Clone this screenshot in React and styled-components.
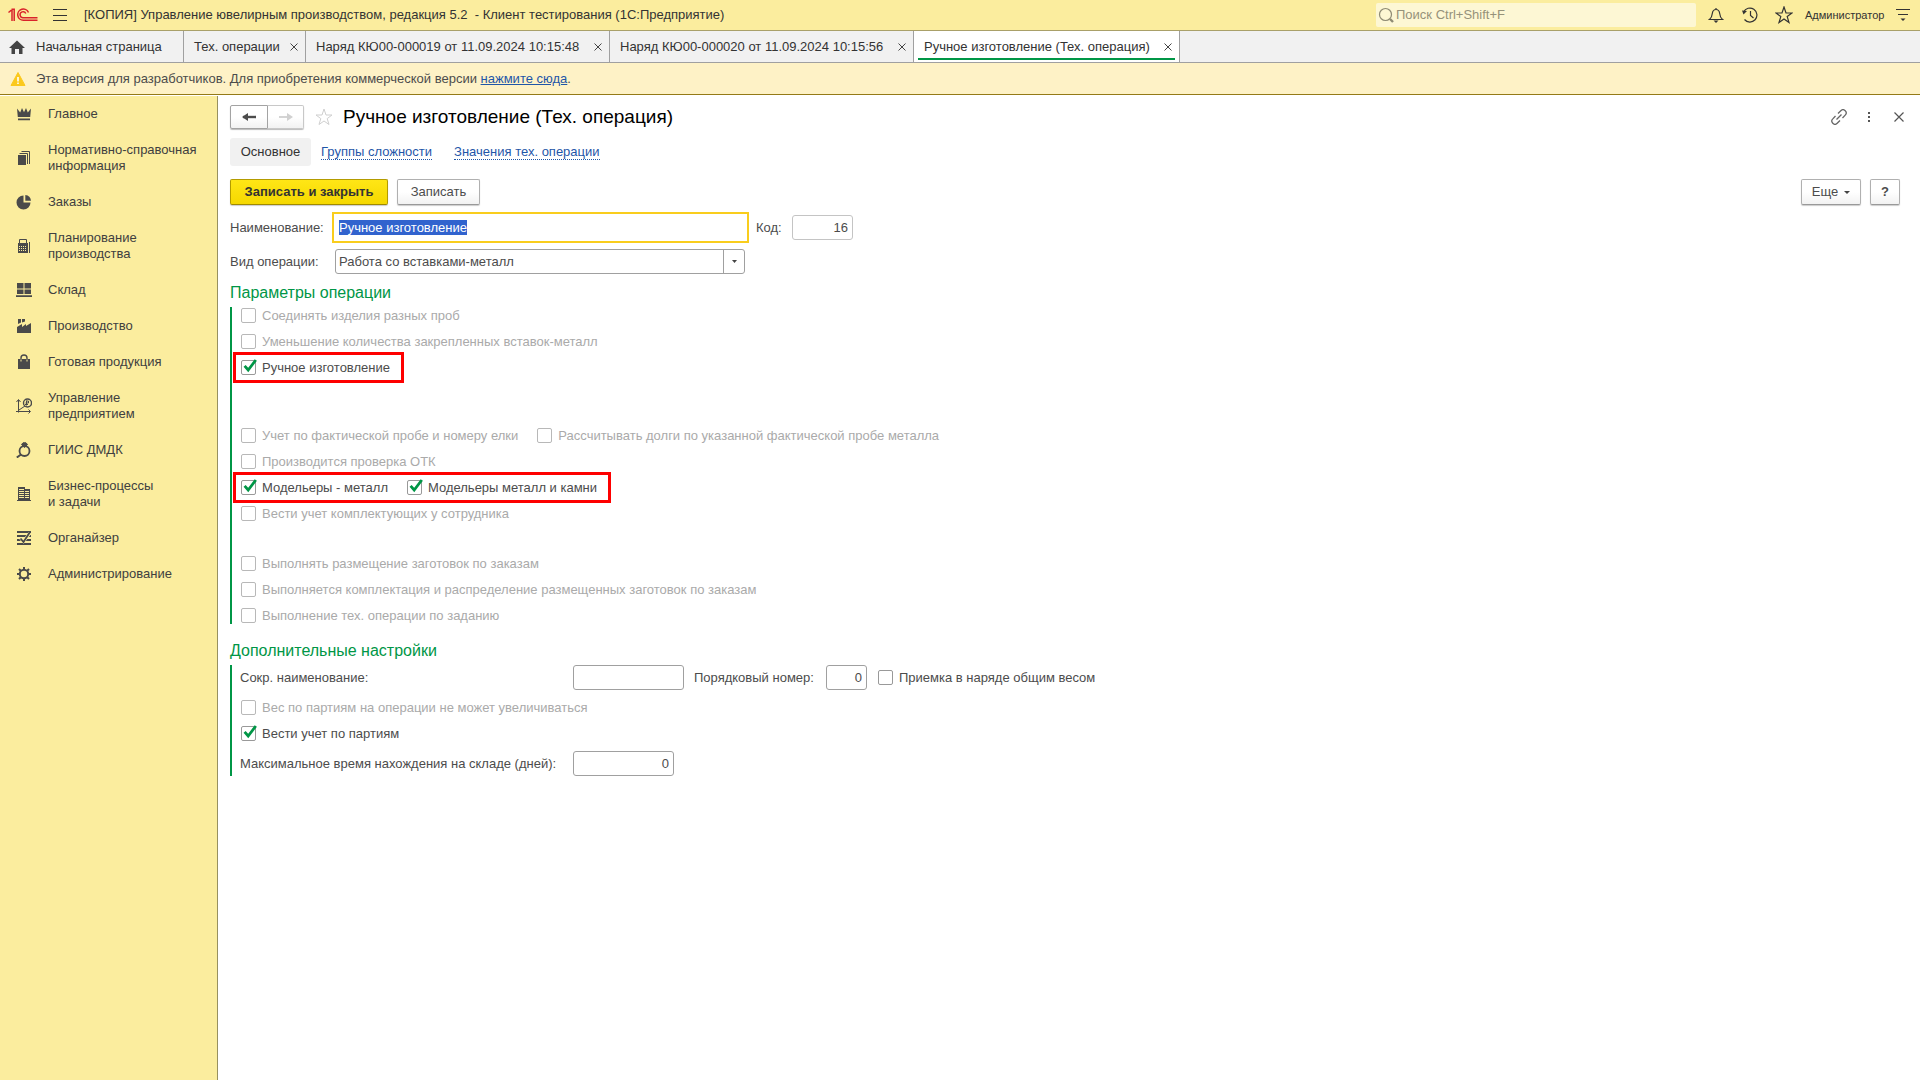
import React, { useEffect, useRef } from "react";
import styled, { createGlobalStyle } from "styled-components";

const c = {
  header: "#fbed9e",
  banner: "#fef2c6",
  grey: "#f1f1f1",
  line: "#a0a0a0",
  text: "#4c4c4c",
  dark: "#333333",
  muted: "#aaaaaa",
  green: "#009646",
  link: "#1f56a8",
};

const GlobalStyle = createGlobalStyle`
  * { box-sizing: border-box; }
  html, body, #root { height: 100%; }
  body {
    margin: 0;
    background: #fff;
    color: ${c.text};
    font: 13px/16px "Liberation Sans", Arial, sans-serif;
  }
  button, input, select { font: inherit; color: inherit; margin: 0; }
`;

const Page = styled.div`
  display: flex;
  flex-direction: column;
  min-height: 100%;
`;

const Header = styled.header`
  display: flex;
  align-items: center;
  height: 31px;
  padding: 0 8px;
  background: ${c.header};
  border-bottom: 1px solid #a9a069;
  color: ${c.dark};
`;

const IconButton = styled.button`
  display: flex;
  align-items: center;
  justify-content: center;
  width: ${(p) => p.$w || 34}px;
  height: 24px;
  padding: 0;
  border: 0;
  background: none;
  color: ${(p) => p.$color || c.dark};
`;

const AppTitle = styled.div`
  flex: 1;
  padding-left: 2px;
  white-space: pre;
`;

const Search = styled.label`
  display: flex;
  align-items: center;
  gap: 2px;
  width: 320px;
  height: 24px;
  margin-right: 3px;
  padding-left: 2px;
  border-radius: 2px;
  background: #fdf7d4;
  color: #8f8b74;
`;

const SearchInput = styled.input`
  flex: 1;
  min-width: 0;
  height: 22px;
  padding: 0 0 2px;
  border: 0;
  outline: 0;
  background: none;
  &::placeholder { color: #96927a; opacity: 1; }
`;

const User = styled.a`
  width: 93px;
  padding-left: 4px;
  font-size: 11px;
  color: ${c.dark};
  text-decoration: none;
`;

const TabBar = styled.nav`
  display: flex;
  height: 32px;
  background: ${c.grey};
  border-bottom: 1px solid ${c.line};
`;

const Tab = styled.div`
  display: flex;
  align-items: center;
  gap: 5px;
  min-width: ${(p) => p.$w}px;
  padding: 0 4px 0 ${(p) => (p.$home ? 8 : 10)}px;
  border-right: 1px solid ${c.line};
  background: ${(p) => (p.$active ? "#fff" : "none")};
  box-shadow: ${(p) => (p.$active ? `inset 0 -2px #fff, inset 4px 0 #fff, inset -4px 0 #fff, inset 0 -4px ${c.green}` : "none")};
  color: ${c.dark};
`;

const TabLink = styled.a`
  display: flex;
  flex: 1;
  align-items: center;
  gap: 10px;
  color: inherit;
  text-decoration: none;
  white-space: nowrap;
`;

const TabClose = styled.button`
  display: flex;
  width: 14px;
  height: 16px;
  padding: 0;
  align-items: center;
  justify-content: center;
  border: 0;
  background: none;
`;

const Banner = styled.div`
  display: flex;
  align-items: center;
  gap: 10px;
  height: 32px;
  padding-left: 10px;
  background: ${c.banner};
  border-bottom: 1px solid #947a17;
`;

const BannerLink = styled.a`
  color: ${c.link};
  text-decoration: underline;
`;

const Body = styled.div`
  display: flex;
  flex: 1;
  padding-top: 1px;
`;

const Sidebar = styled.nav`
  width: 218px;
  flex: none;
  background: ${c.header};
  border-right: 1px solid #97905f;
`;

const SideItem = styled.a`
  display: flex;
  align-items: center;
  gap: 16px;
  padding: 10px 8px 10px 16px;
  color: #404040;
  text-decoration: none;
  white-space: pre-line;
  svg { flex: none; }
`;

const Main = styled.main`
  flex: 1;
  min-width: 0;
  padding: 8px 6px 20px 12px;
`;

const TitleRow = styled.div`
  display: flex;
  align-items: center;
  height: 25px;
`;

const NavGroup = styled.div`
  display: flex;
  border-radius: 2px;
  box-shadow: 0 1px 1px #bbb;
`;

const NavButton = styled.button`
  display: flex;
  align-items: center;
  justify-content: center;
  width: ${(p) => (p.$last ? 36 : 38)}px;
  height: 24px;
  padding: 0;
  border: 1px solid ${(p) => (p.disabled ? "#c8c8c8" : "#a3a3a3")};
  border-left-width: ${(p) => (p.$last ? 0 : 1)}px;
  border-radius: ${(p) => (p.$last ? "0 2px 2px 0" : "2px 0 0 2px")};
  background: linear-gradient(#fff 50%, #f2f2f2);
  color: ${(p) => (p.disabled ? "#d0d0d0" : "#4c4c4c")};
`;

const Title = styled.h1`
  flex: 1;
  margin: 0;
  font-size: 19px;
  line-height: 24px;
  font-weight: 400;
  color: #000;
`;

const SubNav = styled.nav`
  display: flex;
  align-items: center;
  gap: 22px;
  height: 28px;
  margin-top: 9px;
`;

const Current = styled.span`
  min-width: 81px;
  margin-right: -12px;
  padding: 6px 0;
  border-radius: 3px;
  background: ${c.grey};
  color: ${c.dark};
  text-align: center;
`;

const SubLink = styled.a`
  line-height: 15px;
  border-bottom: 1px dotted ${c.link};
  color: ${c.link};
  text-decoration: none;
`;

const Commands = styled.div`
  display: flex;
  gap: 9px;
  margin-top: 13px;
  padding-right: 14px;
`;

const Spacer = styled.div`
  flex: 1;
`;

const Button = styled.button`
  display: flex;
  align-items: center;
  justify-content: center;
  gap: 6px;
  min-width: ${(p) => p.$w}px;
  height: 26px;
  padding: 0 8px;
  border: 1px solid ${(p) => (p.$primary ? "#b39b00" : "#b0b0b0")};
  border-bottom-color: ${(p) => (p.$primary ? "#a08a00" : "#999")};
  border-radius: 2px;
  background: ${(p) => (p.$primary ? "linear-gradient(#ffe616, #f5d800)" : "linear-gradient(#fff 50%, #f2f2f2)")};
  box-shadow: 0 1px 1px #ccc;
  color: ${(p) => (p.$primary ? c.dark : c.text)};
  font-weight: ${(p) => (p.$primary || p.$bold ? 700 : 400)};
  white-space: nowrap;
`;

const Field = styled.div`
  display: flex;
  align-items: center;
  height: 31px;
  margin-top: ${(p) => p.$top || 0}px;
`;

const FieldLabel = styled.label`
  flex: none;
  width: ${(p) => p.$w}px;
`;

const TextInput = styled.input`
  width: ${(p) => p.$w}px;
  height: 25px;
  padding: 0 4px;
  border: 1px solid ${(p) => (p.$light ? "#c4c4c4" : c.line)};
  border-radius: 3px;
  outline: 0;
  background: #fff;
  text-align: ${(p) => (p.$right ? "right" : "left")};
`;

const NameInput = styled.input`
  width: 417px;
  height: 31px;
  margin-right: 7px;
  padding: 0 5px;
  border: 2px solid #f9cd1d;
  outline: 0;
  background: #fff;
  &::selection { background: #3163ce; color: #fff; }
`;

const SelectBox = styled.div`
  display: grid;
  width: 410px;
  height: 25px;
  margin-left: 3px;
  border: 1px solid ${c.line};
  border-radius: 3px;
  > * { grid-area: 1 / 1; }
`;

const Select = styled.select`
  width: 100%;
  padding: 0 24px 0 3px;
  border: 0;
  outline: 0;
  appearance: none;
  background: none;
`;

const SelectArrow = styled.span`
  display: flex;
  align-items: center;
  justify-content: center;
  justify-self: end;
  width: 21px;
  border-left: 1px solid ${c.line};
  pointer-events: none;
`;

const SectionTitle = styled.h2`
  margin: ${(p) => p.$top}px 0 4px;
  font-size: 16px;
  line-height: 20px;
  font-weight: 400;
  color: ${c.green};
`;

const Section = styled.section`
  display: flex;
  flex-direction: column;
  align-items: flex-start;
  gap: ${(p) => p.$gap}px;
  padding: ${(p) => (p.$pad ? "1px 0" : 0)};
  padding-left: 8px;
  border-left: 2px solid ${c.green};
`;

const CheckRow = styled.div`
  display: flex;
  align-items: center;
  gap: 19px;
  height: 15px;
  margin-top: ${(p) => p.$space || 0}px;
  margin-left: 1px;
  padding-right: 6px;
  outline: ${(p) => (p.$marked ? "3px solid #fe0000" : "none")};
  outline-offset: 5px;
`;

const CheckLabel = styled.label`
  display: flex;
  align-items: center;
  gap: 6px;
  line-height: 15px;
  color: ${(p) => (p.$off ? c.muted : c.text)};
  white-space: nowrap;
`;

const CheckFrame = styled.span`
  display: grid;
  width: 15px;
  height: 15px;
  > * { grid-area: 1 / 1; }
  svg { overflow: visible; pointer-events: none; }
`;

const CheckInput = styled.input`
  appearance: none;
  width: 15px;
  height: 15px;
  border: 1px solid ${(p) => (p.disabled ? "#b8b8b8" : "#999")};
  border-radius: 2px;
  background: #fff;
`;

const SettingRow = styled.div`
  display: flex;
  align-items: center;
  height: 25px;
`;

const Gap = styled.div`
  width: ${(p) => p.$w}px;
`;

function Check({ label, checked, off }) {
  return (
    <CheckLabel $off={off}>
      <CheckFrame>
        <CheckInput type="checkbox" defaultChecked={checked} disabled={off} />
        {checked && (
          <svg width="15" height="15" viewBox="0 0 15 15" fill="none" stroke={c.green} strokeWidth="2.8">
            <path d="M3.6 5.8 L7.2 10 L14.8 0" />
          </svg>
        )}
      </CheckFrame>
      {label}
    </CheckLabel>
  );
}

const Svg = ({ s = 16, children, ...rest }) => (
  <svg width={s} height={s} viewBox={`0 0 ${s} ${s}`} fill="none" aria-hidden="true" {...rest}>
    {children}
  </svg>
);

const k = "#4a4a4a";
const icons = {
  crown: <Svg fill={k}><path d="M1 2.500l3.200 3.900L6 2l2 4.200L10 2l1.800 4.400L15 2.500l-.8 8.500H1.800zM2 12.500h12v1.700H2z" /></Svg>,
  docs: (
    <Svg stroke={k}>
      <path d="M2 5h8v10H2z" fill={k} stroke="none" />
      <path d="M3.500 3.500h8V14M5.500 1.500h8V14" />
    </Svg>
  ),
  pie: (
    <Svg fill={k}>
      <path d="M7.500 1.500v7h7A7 7 0 1 1 7.500 1.500z" />
      <path d="M9.300 1A6.500 6.500 0 0 1 15 6.800H9.300z" />
    </Svg>
  ),
  calc: (
    <Svg>
      <path d="M2 5h10v10H2zM13 4h1v11h-1z" fill={k} />
      <path d="M3.500 1.500h7v4h-7z" fill={c.header} stroke={k} />
      <path d="M3 8.500h8M3 10.500h8M3 12.500h8" stroke={c.header} strokeDasharray="1 1" />
    </Svg>
  ),
  store: <Svg fill={k}><path d="M1 1h6.500v5.500H1zM8.500 1H15v5.500H8.500zM1 7.500h6.500V12H1zM8.500 7.500H15V12H8.500zM0 13.200h16V15H0z" /></Svg>,
  factory: <Svg fill={k}><path d="M1 15V9l5-3v3l4-3v2l5-3v10zM2 1h3v3.500L2 6zM6 1h3v2.500L6 4.500z" /></Svg>,
  bag: (
    <Svg>
      <path d="M2 5h12v10H2z" fill={k} />
      <path d="M5 5V4a3 3 0 0 1 6 0v1" stroke={k} strokeWidth="1.400" />
      <path d="M5 5.500v2M11 5.500v2" stroke={c.header} />
    </Svg>
  ),
  chart: (
    <Svg stroke={k}>
      <path d="M2.500 2v12.500M0 13.500h14M.5 4l2-2.500 2 2.500M12.500 11.500l2 2-2 2M3 12l6-4" />
      <circle cx="11.500" cy="5" r="4" strokeWidth="1.400" />
      <path d="M10.500 2.500v5M10.500 3h2v2h-3M9 6.500h3" />
    </Svg>
  ),
  ring: (
    <Svg stroke={k}>
      <circle cx="8.500" cy="9" r="5" strokeWidth="1.800" />
      <path d="M5.500 2.500L7 .8h3l1.500 1.700-3 3z" fill={k} />
      <path d="M5 12.500L.8 15.500" strokeWidth="2" />
    </Svg>
  ),
  building: (
    <Svg fill={k}>
      <path d="M2 1h7v13H2zM9 3h5v11H9zM1 14h14v1H1z" />
      <path d="M3 3.500h5M3 5.500h5M3 7.500h5M3 9.500h5M3 11.500h5M9 5.500h4M9 7.500h4M9 9.500h4M9 11.500h4" stroke={c.header} />
    </Svg>
  ),
  organizer: (
    <Svg stroke={k}>
      <path d="M1 2h14M1 6h14M1 10h14M1 14h14" strokeWidth="2" />
      <path d="M4.500 8.500l3 3L14 3" stroke={c.header} strokeWidth="3" />
      <path d="M4.500 8.500l3 3.500L14 2" strokeWidth="1.800" />
    </Svg>
  ),
  gear: (
    <Svg stroke={k}>
      <circle cx="8" cy="8" r="4.200" strokeWidth="2" />
      <path d="M8 1v3M8 12v3M1 8h3M12 8h3M3 3l2 2M11 11l2 2M13 3l-2 2M5 11l-2 2" strokeWidth="2" />
    </Svg>
  ),
};

const sideItems = [
  ["crown", "Главное"],
  ["docs", "Нормативно-справочная\nинформация"],
  ["pie", "Заказы"],
  ["calc", "Планирование\nпроизводства"],
  ["store", "Склад"],
  ["factory", "Производство"],
  ["bag", "Готовая продукция"],
  ["chart", "Управление\nпредприятием"],
  ["ring", "ГИИС ДМДК"],
  ["building", "Бизнес-процессы\nи задачи"],
  ["organizer", "Органайзер"],
  ["gear", "Администрирование"],
];

const tabs = [
  { label: "Тех. операции", width: 122 },
  { label: "Наряд КЮ00-000019 от 11.09.2024 10:15:48", width: 304 },
  { label: "Наряд КЮ00-000020 от 11.09.2024 10:15:56", width: 304 },
  { label: "Ручное изготовление (Тех. операция)", width: 266, active: true },
];

const params = [
  { items: [{ label: "Соединять изделия разных проб", off: true }] },
  { items: [{ label: "Уменьшение количества закрепленных вставок-металл", off: true }] },
  { marked: true, items: [{ label: "Ручное изготовление", checked: true }] },
  {
    space: 42,
    items: [
      { label: "Учет по фактической пробе и номеру елки", off: true },
      { label: "Рассчитывать долги по указанной фактической пробе металла", off: true },
    ],
  },
  { items: [{ label: "Производится проверка ОТК", off: true }] },
  {
    marked: true,
    items: [
      { label: "Модельеры - металл", checked: true },
      { label: "Модельеры металл и камни", checked: true },
    ],
  },
  { items: [{ label: "Вести учет комплектующих у сотрудника", off: true }] },
  { space: 24, items: [{ label: "Выполнять размещение заготовок по заказам", off: true }] },
  { items: [{ label: "Выполняется комплектация и распределение размещенных заготовок по заказам", off: true }] },
  { items: [{ label: "Выполнение тех. операции по заданию", off: true }] },
];

const STAR = "M9 1l2 6h6l-4.800 3.600L14 16.500 9 13l-5 3.500 1.800-5.900L1 7h6z";

export default function App() {
  const nameRef = useRef(null);
  useEffect(() => {
    nameRef.current.focus();
    nameRef.current.select();
  }, []);

  return (
    <Page>
      <GlobalStyle />
      <Header>
        <svg width="30" height="14" viewBox="0 0 30 14" fill="none" stroke="#d9232a" strokeWidth="1.500" aria-label="1С">
          <path d="M.5 4.500L3 2.500h1V13M3.500 1.200h2.700V13" />
          <path d="M20.500 4.500A5.600 5.600 0 1 0 15.500 12.300H29.500" />
          <path d="M17.800 5.500A3 3 0 1 0 15.500 9.700H29.500" />
        </svg>
        <IconButton $w={44} aria-label="Меню">
          <Svg s={14} stroke="currentColor"><path d="M0 1.500h14M0 7.500h14M0 12.500h14" /></Svg>
        </IconButton>
        <AppTitle>{"[КОПИЯ] Управление ювелирным производством, редакция 5.2  - Клиент тестирования (1С:Предприятие)"}</AppTitle>
        <Search>
          <Svg stroke="currentColor">
            <circle cx="7.500" cy="7.500" r="6" strokeWidth="1.200" />
            <path d="M12 12l3 3" strokeWidth="2.400" />
          </Svg>
          <SearchInput placeholder="Поиск Ctrl+Shift+F" aria-label="Поиск" />
        </Search>
        <IconButton aria-label="Уведомления">
          <Svg stroke="currentColor">
            <path d="M1.500 12.500c2-1.500 2.500-3 2.800-6C4.600 4 6 2.500 8 2.500s3.400 1.500 3.700 4c.3 3 .8 4.500 2.800 6zM8 1v1.500" strokeWidth="1.200" />
            <path d="M5.500 13.500h5L8 16z" fill="currentColor" stroke="none" />
          </Svg>
        </IconButton>
        <IconButton aria-label="История">
          <Svg stroke="currentColor">
            <path d="M1.600 5A7 7 0 1 1 2.500 12.500M8.500 4v4.500l3 2.500" strokeWidth="1.200" />
            <path d="M0 3.500l5 .5-3.500 3.500z" fill="currentColor" stroke="none" />
          </Svg>
        </IconButton>
        <IconButton aria-label="Избранное">
          <Svg s={18} stroke="currentColor" strokeWidth="1.200"><path d={STAR} /></Svg>
        </IconButton>
        <User href="#">Администратор</User>
        <IconButton $w={18} aria-label="Настройки">
          <Svg stroke="currentColor">
            <path d="M1 2.500h14M3 7.500h10" strokeWidth="1.200" />
            <path d="M5.500 11.500h5L8 14z" fill="currentColor" stroke="none" />
          </Svg>
        </IconButton>
      </Header>

      <TabBar>
        <Tab $home $w={184}>
          <TabLink href="#">
            <Svg s={18} fill="#444"><path d="M9 2.500l8 7.500h-2.500v6H11v-5H7v5H3.500v-6H1z" /></Svg>
            Начальная страница
          </TabLink>
        </Tab>
        {tabs.map((t) => (
          <Tab key={t.label} $w={t.width} $active={t.active}>
            <TabLink href="#">{t.label}</TabLink>
            <TabClose aria-label="Закрыть">
              <Svg s={8} stroke="#444"><path d="M.5.5l7 7M7.500.5l-7 7" /></Svg>
            </TabClose>
          </Tab>
        ))}
      </TabBar>

      <Banner>
        <Svg s={16}>
          <path d="M8 1.500L15 14.500H1z" fill="#fbc91d" stroke="#fbc91d" strokeLinejoin="round" />
          <path d="M8 6v4.500M8 11.500v1.500" stroke="#fff" strokeWidth="1.600" />
        </Svg>
        <span>
          Эта версия для разработчиков. Для приобретения коммерческой версии <BannerLink href="#">нажмите сюда</BannerLink>.
        </span>
      </Banner>

      <Body>
        <Sidebar>
          {sideItems.map(([icon, label]) => (
            <SideItem href="#" key={label}>
              {icons[icon]}
              <span>{label}</span>
            </SideItem>
          ))}
        </Sidebar>

        <Main>
          <TitleRow>
            <NavGroup>
              <NavButton aria-label="Назад">
                <Svg stroke="currentColor"><path d="M2 8h13" strokeWidth="2.400" /><path d="M1 8l6-4v8z" fill="currentColor" stroke="none" /></Svg>
              </NavButton>
              <NavButton $last disabled aria-label="Вперед">
                <Svg stroke="currentColor"><path d="M1 8h12" strokeWidth="1.800" /><path d="M15 8L9 4v8z" fill="currentColor" stroke="none" /></Svg>
              </NavButton>
            </NavGroup>
            <IconButton $w={39} $color="#cfcfcf" aria-label="В избранное">
              <Svg s={18} stroke="currentColor"><path d={STAR} /></Svg>
            </IconButton>
            <Title>Ручное изготовление (Тех. операция)</Title>
            <IconButton $w={30} $color="#666" aria-label="Ссылка">
              <Svg stroke="currentColor" strokeWidth="1.300">
                <path d="M7 4.500L9.800 1.700a3 3 0 0 1 4.400 4.400L11.500 9M9 11.500l-2.800 2.800a3 3 0 0 1-4.400-4.400L4.500 7M5.500 10.500l5-5" />
              </Svg>
            </IconButton>
            <IconButton $w={30} $color="#555" aria-label="Дополнительно">
              <Svg fill="currentColor"><path d="M7 3h2v2H7zM7 7h2v2H7zM7 11h2v2H7z" /></Svg>
            </IconButton>
            <IconButton $w={30} $color="#555" aria-label="Закрыть">
              <Svg s={10} stroke="currentColor" strokeWidth="1.200"><path d="M.5.5l9 9M9.500.5l-9 9" /></Svg>
            </IconButton>
          </TitleRow>

          <SubNav>
            <Current>Основное</Current>
            <SubLink href="#">Группы сложности</SubLink>
            <SubLink href="#">Значения тех. операции</SubLink>
          </SubNav>

          <Commands>
            <Button $primary $w={158}>Записать и закрыть</Button>
            <Button $w={83}>Записать</Button>
            <Spacer />
            <Button $w={60}>
              Еще
              <svg width="6" height="4" viewBox="0 0 6 4" fill="#444" aria-hidden="true"><path d="M0 1h6L3 4z" /></svg>
            </Button>
            <Button $bold $w={30} aria-label="Справка">?</Button>
          </Commands>

          <Field $top={7}>
            <FieldLabel $w={102} htmlFor="name">Наименование:</FieldLabel>
            <NameInput id="name" ref={nameRef} defaultValue="Ручное изготовление" />
            <FieldLabel $w={36} htmlFor="code">Код:</FieldLabel>
            <TextInput id="code" $w={61} $light $right defaultValue="16" />
          </Field>
          <Field $top={3}>
            <FieldLabel $w={102} htmlFor="kind">Вид операции:</FieldLabel>
            <SelectBox>
              <Select id="kind">
                <option>Работа со вставками-металл</option>
              </Select>
              <SelectArrow>
                <svg width="5" height="3" viewBox="0 0 5 3" fill="#444" aria-hidden="true"><path d="M0 0h5L2.500 3z" /></svg>
              </SelectArrow>
            </SelectBox>
          </Field>

          <SectionTitle $top={6}>Параметры операции</SectionTitle>
          <Section $gap={11} $pad>
            {params.map((row) => (
              <CheckRow key={row.items[0].label} $space={row.space} $marked={row.marked}>
                {row.items.map((item) => <Check key={item.label} {...item} />)}
              </CheckRow>
            ))}
          </Section>

          <SectionTitle $top={17}>Дополнительные настройки</SectionTitle>
          <Section $gap={10}>
            <SettingRow>
              <FieldLabel $w={333} htmlFor="short">Сокр. наименование:</FieldLabel>
              <TextInput id="short" $w={111} />
              <Gap $w={10} />
              <FieldLabel $w={132} htmlFor="order">Порядковый номер:</FieldLabel>
              <TextInput id="order" $w={41} $right defaultValue="0" />
              <Gap $w={11} />
              <Check label="Приемка в наряде общим весом" />
            </SettingRow>
            <CheckRow><Check label="Вес по партиям на операции не может увеличиваться" off /></CheckRow>
            <CheckRow $space={1}><Check label="Вести учет по партиям" checked /></CheckRow>
            <SettingRow>
              <FieldLabel $w={333} htmlFor="days">Максимальное время нахождения на складе (дней):</FieldLabel>
              <TextInput id="days" $w={101} $right defaultValue="0" />
            </SettingRow>
          </Section>
        </Main>
      </Body>
    </Page>
  );
}
